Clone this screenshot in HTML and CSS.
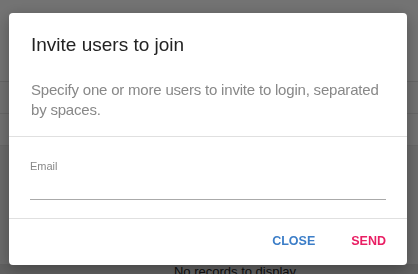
FILE: index.html
```html
<!DOCTYPE html>
<html lang="en">

<head>
  <meta charset="utf-8">
  <title>Invite users</title>
  <link rel="stylesheet" href="styles.css">
</head>

<body>
  <div class="page">
    <div class="page-bar"></div>
    <div class="page-row"></div>
    <div class="page-row"></div>
    <div class="page-body"></div>
    <div class="page-empty">No records to display</div>
  </div>

  <div class="overlay">
    <div class="dialog">
      <h3 class="dialog-title">Invite users to join</h3>
      <p class="dialog-text">Specify one or more users to invite to login, separated by spaces.</p>
      <div class="dialog-body">
        <label class="field">
          <span class="field-label">Email</span>
          <input type="text" class="field-input">
        </label>
      </div>
      <div class="dialog-actions">
        <button type="button" class="btn btn-close">CLOSE</button>
        <button type="button" class="btn btn-send">SEND</button>
      </div>
    </div>
  </div>
</body>

</html>
```

FILE: styles.css
```css
html,
body {
  margin: 0;
  padding: 0;
  height: 100%;
}

body {
  font-family: "Liberation Sans", Arial, sans-serif;
  background: #fff;
  overflow: hidden;
}

.page {
  height: 100%;
  display: flex;
  flex-direction: column;
}

.page-bar {
  height: 81px;
  background: #fafafa;
  border-bottom: 1px solid #ddd;
}

.page-row {
  height: 31px;
  background: #f6f6f6;
  border-bottom: 1px solid #e0e0e0;
}

.page-body {
  flex: 1;
  background: #e8e8e8;
}

.page-empty {
  height: 10px;
  text-align: center;
  font-size: 13px;
  line-height: 16px;
  color: #222;
  padding-left: 52px;
  background: #d2d2d2;
}

.overlay {
  position: fixed;
  inset: 0;
  background: rgba(0, 0, 0, 0.54);
  padding: 13px 11px 0 9px;
}

.dialog {
  background: #fff;
  border-radius: 4px;
  box-shadow: 0 4px 16px rgba(0, 0, 0, 0.3);
  height: 252px;
  box-sizing: border-box;
  display: flex;
  flex-direction: column;
}

.dialog-title {
  margin: 0;
  padding: 20px 22px 0;
  font-size: 19px;
  line-height: 24px;
  font-weight: normal;
  color: #222;
}

.dialog-text {
  margin: 0;
  padding: 23px 22px 0;
  height: 80px;
  box-sizing: border-box;
  font-size: 15px;
  letter-spacing: -0.2px;
  line-height: 20px;
  color: #888;
  border-bottom: 1px solid #e0e0e0;
}

.dialog-body {
  padding: 22px 21px 0;
  height: 82px;
  box-sizing: border-box;
  border-bottom: 1px solid #e0e0e0;
}

.field {
  display: flex;
  flex-direction: column;
}

.field-label {
  font-size: 11px;
  color: #888;
  line-height: 14px;
}

.field-input {
  border: none;
  border-bottom: 1px solid #aaa;
  outline: none;
  height: 20px;
  padding: 0;
  margin-top: 6px;
  font-size: 15px;
  font-family: inherit;
}

.dialog-actions {
  flex: 1;
  display: flex;
  justify-content: flex-end;
  align-items: center;
  gap: 20px;
  padding: 2px 13px 4px;
}

.btn {
  background: none;
  border: none;
  font-family: inherit;
  font-size: 12.5px;
  font-weight: bold;
  padding: 8px 8px;
  cursor: pointer;
}

.btn-close {
  color: #3c7ec8;
}

.btn-send {
  color: #e91e63;
}
```
